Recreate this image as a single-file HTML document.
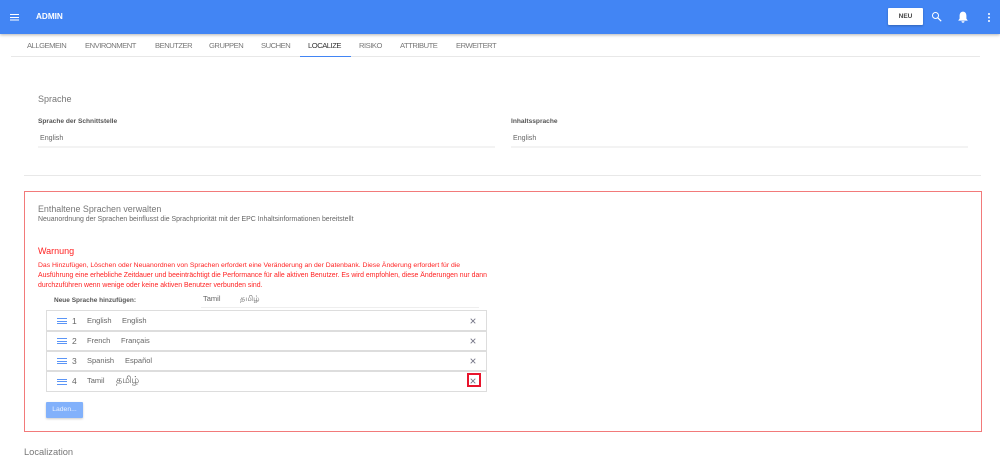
<!DOCTYPE html>
<html lang="de">
<head>
<meta charset="utf-8">
<title>Admin</title>
<style>
html,body{margin:0;padding:0;background:#fff;}
body{width:1000px;height:459px;position:relative;overflow:hidden;font-family:"Liberation Sans","Noto Sans CJK SC",sans-serif;color:#666;}
#w{position:absolute;left:0;top:0;width:1000px;height:459px;filter:blur(.3px);}
.a{position:absolute;white-space:nowrap;}
.hdr{left:0;top:0;width:1000px;height:34px;background:#4285f4;box-shadow:0 1px 3px rgba(0,0,0,.3);}
.tab{top:41px;font-size:7.6px;line-height:10px;color:#777;letter-spacing:-.47px;}
.row{left:46px;width:439px;height:19px;border:1px solid #ddd;background:#fff;}
.t{font-size:7.5px;line-height:10px;color:#666;}
.n{font-size:8.5px;line-height:10px;color:#666;}
.ta{font-size:9.5px;line-height:10px;color:#666;}
.warn{font-size:6.9px;line-height:10px;color:#f22;}
.bar{left:57px;width:10px;height:1px;background:#5b95f6;}
</style>
</head>
<body>
<div id="w">
<div class="a hdr"></div>
<svg class="a" style="left:9px;top:13px" width="11" height="8" viewBox="0 0 11 8"><path d="M1 1.5h9M1 4.5h9M1 7h9" stroke="#fff" stroke-width="1"/></svg>
<div class="a" style="left:36px;top:12px;font-size:8.2px;line-height:10px;font-weight:bold;color:#fff">ADMIN</div>
<div class="a" style="left:888px;top:8px;width:35px;height:17px;background:#fff;border-radius:1px;text-align:center;font-size:6.5px;line-height:18px;font-weight:bold;color:#444;box-shadow:0 1px 2px rgba(0,0,0,.25)">NEU</div>
<svg class="a" style="left:931px;top:11px" width="12" height="12" viewBox="0 0 12 12"><circle cx="4.5" cy="4.5" r="3" fill="none" stroke="#fff" stroke-width="1"/><path d="M6.8 6.8l3.4 3.4" stroke="#fff" stroke-width="1.2"/></svg>
<svg class="a" style="left:957px;top:11px" width="12" height="13" viewBox="0 0 12 13"><path d="M6 .6c-2.3 0-3.4 1.9-3.4 4.2v2.8L1.2 9.6h9.6L9.4 7.6V4.8C9.4 2.5 8.3.6 6 .6z" fill="#fff"/><path d="M4.5 10.3h3a1.5 1.5 0 0 1-3 0z" fill="#fff"/></svg>
<svg class="a" style="left:987px;top:12px" width="4" height="12" viewBox="0 0 4 12"><circle cx="2" cy="2" r="1" fill="#fff"/><circle cx="2" cy="5.5" r="1" fill="#fff"/><circle cx="2" cy="9" r="1" fill="#fff"/></svg>

<div class="a tab" style="left:27px">ALLGEMEIN</div>
<div class="a tab" style="left:85px">ENVIRONMENT</div>
<div class="a tab" style="left:155px">BENUTZER</div>
<div class="a tab" style="left:209px">GRUPPEN</div>
<div class="a tab" style="left:261px">SUCHEN</div>
<div class="a tab" style="left:308px;color:#333">LOCALIZE</div>
<div class="a tab" style="left:359px">RISIKO</div>
<div class="a tab" style="left:400px">ATTRIBUTE</div>
<div class="a tab" style="left:456px">ERWEITERT</div>
<div class="a" style="left:11px;top:56px;width:969px;height:1px;background:#e8e8e8"></div>
<div class="a" style="left:300px;top:55.5px;width:51px;height:1.5px;background:#4285f4"></div>

<div class="a" style="left:38px;top:92.5px;font-size:9px;line-height:12px;color:#777">Sprache</div>
<div class="a" style="left:38px;top:117px;font-size:6.6px;line-height:9px;font-weight:bold;color:#555">Sprache der Schnittstelle</div>
<div class="a" style="left:40px;top:133px;font-size:7.1px;line-height:10px;color:#666">English</div>
<div class="a" style="left:38px;top:146px;width:457px;height:2px;background:#f3f3f3"></div>
<div class="a" style="left:511px;top:117px;font-size:6.6px;line-height:9px;font-weight:bold;color:#555">Inhaltssprache</div>
<div class="a" style="left:513px;top:133px;font-size:7.1px;line-height:10px;color:#666">English</div>
<div class="a" style="left:511px;top:146px;width:457px;height:2px;background:#f3f3f3"></div>
<div class="a" style="left:24px;top:175px;width:957px;height:1px;background:#e8e8e8"></div>

<div class="a" style="left:24px;top:191px;width:956px;height:239px;border:1px solid #f27a7a"></div>
<div class="a" style="left:38px;top:203px;font-size:8.9px;line-height:12px;color:#777">Enthaltene Sprachen verwalten</div>
<div class="a" style="left:38px;top:214.5px;font-size:6.93px;line-height:10px;color:#666">Neuanordnung der Sprachen beinflusst die Sprachpriorität mit der EPC Inhaltsinformationen bereitstellt</div>
<div class="a" style="left:38px;top:245px;font-size:9px;line-height:12px;color:#f22">Warnung</div>
<div class="a warn" style="left:38px;top:260.5px;font-size:6.83px">Das Hinzufügen, Löschen oder Neuanordnen von Sprachen erfordert eine Veränderung an der Datenbank. Diese Änderung erfordert für die</div>
<div class="a warn" style="left:38px;top:270.5px">Ausführung eine erhebliche Zeitdauer und beeinträchtigt die Performance für alle aktiven Benutzer. Es wird empfohlen, diese Änderungen nur dann</div>
<div class="a warn" style="left:38px;top:280.5px">durchzuführen wenn wenige oder keine aktiven Benutzer verbunden sind.</div>
<div class="a" style="left:54px;top:295.5px;font-size:6.5px;line-height:10px;font-weight:bold;color:#555">Neue Sprache hinzufügen:</div>
<div class="a t" style="left:203px;top:294px">Tamil</div>
<div class="a t" style="left:240px;top:294px;font-size:8px">தமிழ்</div>
<div class="a" style="left:201px;top:307px;width:278px;height:1px;background:#eee"></div>

<div class="a row" style="top:310px"></div>
<div class="a row" style="top:331px;height:18px"></div>
<div class="a row" style="top:351px;height:18px"></div>
<div class="a row" style="top:371px;height:18.5px"></div>

<div class="a bar" style="top:318px"></div><div class="a bar" style="top:321px"></div><div class="a bar" style="top:323px"></div>
<div class="a bar" style="top:338px"></div><div class="a bar" style="top:341px"></div><div class="a bar" style="top:343px"></div>
<div class="a bar" style="top:358px"></div><div class="a bar" style="top:361px"></div><div class="a bar" style="top:363px"></div>
<div class="a bar" style="top:379px"></div><div class="a bar" style="top:381px"></div><div class="a bar" style="top:384px"></div>

<div class="a n" style="left:72px;top:316px">1</div><div class="a t" style="left:87px;top:316px">English</div><div class="a t" style="left:122px;top:316px">English</div>
<div class="a n" style="left:72px;top:336px">2</div><div class="a t" style="left:87px;top:336px">French</div><div class="a t" style="left:121px;top:336px">Français</div>
<div class="a n" style="left:72px;top:356px">3</div><div class="a t" style="left:87px;top:356px">Spanish</div><div class="a t" style="left:125px;top:356px">Español</div>
<div class="a n" style="left:72px;top:376px">4</div><div class="a t" style="left:87px;top:376px">Tamil</div><div class="a ta" style="left:116px;top:376px">தமிழ்</div>

<svg class="a" style="left:470px;top:318px" width="6" height="6" viewBox="0 0 6 6"><path d="M.7.7l4.6 4.6M5.3.7L.7 5.3" stroke="#778" stroke-width=".9"/></svg>
<svg class="a" style="left:470px;top:338px" width="6" height="6" viewBox="0 0 6 6"><path d="M.7.7l4.6 4.6M5.3.7L.7 5.3" stroke="#778" stroke-width=".9"/></svg>
<svg class="a" style="left:470px;top:358px" width="6" height="6" viewBox="0 0 6 6"><path d="M.7.7l4.6 4.6M5.3.7L.7 5.3" stroke="#778" stroke-width=".9"/></svg>
<svg class="a" style="left:470px;top:378px" width="6" height="6" viewBox="0 0 6 6"><path d="M.7.7l4.6 4.6M5.3.7L.7 5.3" stroke="#778" stroke-width=".9"/></svg>
<div class="a" style="left:467px;top:373px;width:10px;height:10px;border:2px solid #e8142c"></div>

<div class="a" style="left:46px;top:402px;width:37px;height:16px;background:#82b1fb;border-radius:1px;text-align:center;font-size:6.8px;line-height:16px;color:#eaf2ff;box-shadow:0 1px 2px rgba(0,0,0,.2)">Laden...</div>
<div class="a" style="left:24px;top:446px;font-size:9.3px;line-height:12px;color:#777">Localization</div>
</div>
</body>
</html>
